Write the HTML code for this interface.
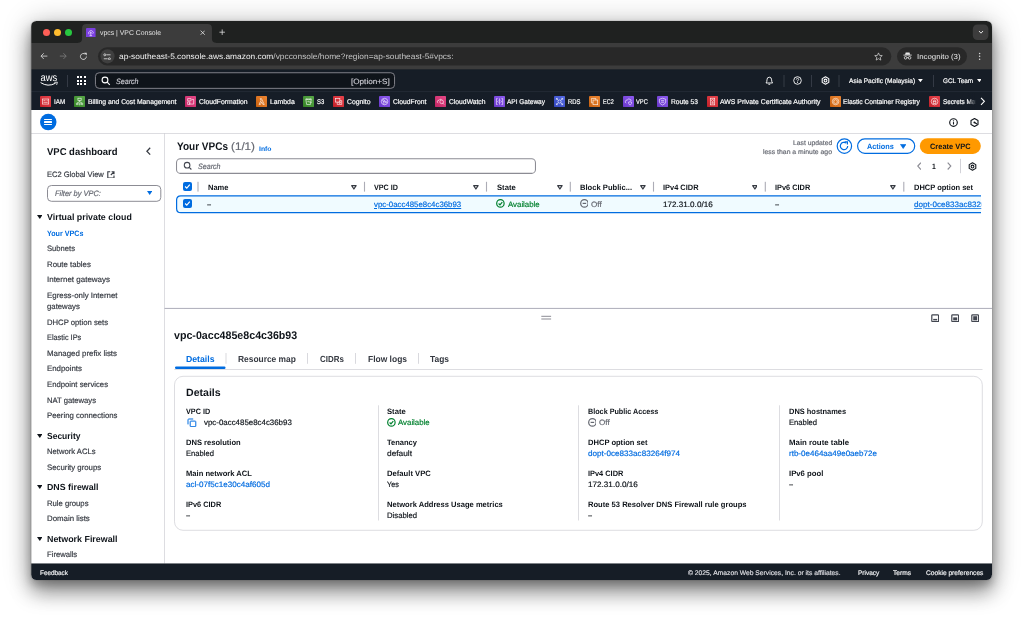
<!DOCTYPE html>
<html lang="en"><head><meta charset="utf-8"><title>vpcs | VPC Console</title>
<style>
html,body{margin:0;padding:0;background:#fff;}
body{width:1023px;height:621px;position:relative;overflow:hidden;font-family:"Liberation Sans",sans-serif;text-rendering:geometricPrecision;}
#shadow{position:absolute;left:31px;top:21px;width:961px;height:558.5px;border-radius:5.5px;
 box-shadow:0 0 1px rgba(0,0,0,.6),0 13px 20px rgba(0,0,0,.36),0 5px 8px rgba(0,0,0,.2),0 2px 28px rgba(0,0,0,.27);background:#fff;}
#win{position:absolute;left:31px;top:21px;width:961px;height:558.5px;border-radius:5.5px;overflow:hidden;background:#fff;}
#in{position:absolute;left:-31px;top:-21px;width:1023px;height:621px;will-change:transform;}
.a{position:absolute;display:block;}
.m{display:inline-block;width:0;height:0;}
.t{position:absolute;white-space:nowrap;transform-origin:0 50%;display:block;-webkit-text-stroke:0.18px currentColor;text-decoration-thickness:0.6px;text-underline-offset:1px;}
</style></head><body>
<div id="shadow"></div>
<div id="win"><div id="in">
<div class="a" style="left:31px;top:21px;width:961px;height:22.3px;background:#1f2120;"></div>
<div class="a" style="left:31px;top:43px;width:961px;height:27px;background:#3c3c3c;"></div>
<div class="a" style="left:31px;top:70px;width:961px;height:22.6px;background:#161d26;"></div>
<svg class="a" style="left:31px;top:69px" width="961" height="2"><rect x="0.00" y="0.30" width="961" height="0.8" rx="0" fill="#161d26"/></svg>
<div class="a" style="left:31px;top:92.5px;width:961px;height:17.6px;background:#161d27;"></div>
<svg class="a" style="left:31px;top:91px" width="961" height="2"><rect x="0.00" y="0.20" width="961" height="0.9" rx="0" fill="#252c37"/></svg>
<svg class="a" style="left:31px;top:109px" width="961" height="2"><rect x="0.00" y="0.90" width="961" height="0.5" rx="0" fill="#161d27"/></svg>
<div class="a" style="left:31px;top:110px;width:961px;height:24px;background:#fff;"></div>
<svg class="a" style="left:31px;top:133px" width="961" height="1"><rect x="0.00" y="0.00" width="961" height="0.6" rx="0" fill="#c6c6cd"/></svg>
<div class="a" style="left:31px;top:134px;width:134px;height:430px;background:#fff;"></div>
<svg class="a" style="left:164px;top:133px" width="1" height="431"><rect x="0.20" y="0.30" width="0.6" height="430.2" rx="0" fill="#c6c6cd"/></svg>
<div class="a" style="left:31px;top:564px;width:961px;height:17px;background:#161d26;"></div>
<svg class="a" style="left:31px;top:563px" width="961" height="2"><rect x="0.00" y="0.45" width="961" height="0.7" rx="0" fill="#161d26"/></svg>
<div class="a" style="left:42.6px;top:29.0px;width:7px;height:7px;background:#fe5f57;border-radius:50%;"></div>
<div class="a" style="left:53.8px;top:29.0px;width:7px;height:7px;background:#febc2e;border-radius:50%;"></div>
<div class="a" style="left:64.9px;top:29.0px;width:7px;height:7px;background:#28c840;border-radius:50%;"></div>
<svg class="a" style="left:78px;top:24.3px;" width="138" height="19.7" viewBox="0 0 138 19.7"><path d="M0 18.8 Q4 18.8 4 14.8 V4.5 Q4 0 8.5 0 H129.5 Q134 0 134 4.5 V14.8 Q134 18.8 138 18.8 V19.7 H0 Z" fill="#3c3c3c"/></svg>
<svg class="a" style="left:86.2px;top:27.6px;" width="9.6" height="9.6" viewBox="0 0 10 10"><rect width="10" height="10" rx="1" fill="#7a3fe0"/><path d="M3 6.5 Q2 4 4 3.2 Q5.5 1.8 7 3.6 Q8.4 4.4 7 6 M4 5 L6 5 M5 4 L5 8 M3.6 8 H6.4" stroke="#e9dcff" stroke-width=".8" fill="none"/></svg>
<svg class="a" style="left:199.5px;top:29.8px;" width="5.4" height="5.4" viewBox="0 0 6 6"><path d="M.7 .7 L5.3 5.3 M5.3 .7 L.7 5.3" stroke="#e3e3e3" stroke-width=".9" fill="none"/></svg>
<svg class="a" style="left:219px;top:29.3px;" width="6.4" height="6.4" viewBox="0 0 7 7"><path d="M3.5 .5 V6.5 M.5 3.5 H6.5" stroke="#e3e3e3" stroke-width=".85" fill="none"/></svg>
<svg class="a" style="left:971px;top:23px" width="19" height="18"><rect x="1.80" y="1.50" width="15.60" height="15.50" rx="4.60" fill="#3c3c3c"/></svg>
<svg class="a" style="left:977.6px;top:30.4px;" width="6" height="4.4" viewBox="0 0 6 4.4"><path d="M1 1 L3 3.2 L5 1" stroke="#e3e3e3" stroke-width="1" fill="none"/></svg>
<svg class="a" style="left:39.5px;top:52.2px;" width="8.2" height="8.2" viewBox="0 0 10 10"><path d="M9 5 H1.3 M4.6 1.5 L1.2 5 L4.6 8.5" stroke="#dadada" stroke-width="1" fill="none"/></svg>
<svg class="a" style="left:59.4px;top:52.2px;" width="8.2" height="8.2" viewBox="0 0 10 10"><path d="M1 5 H8.7 M5.4 1.5 L8.8 5 L5.4 8.5" stroke="#7d7d7d" stroke-width="1" fill="none"/></svg>
<svg class="a" style="left:78.8px;top:51.8px;" width="9" height="9" viewBox="0 0 10 10"><path d="M8.2 5 A3.3 3.3 0 1 1 6.9 2.35" stroke="#dadada" stroke-width="1" fill="none"/><path d="M5.6 .8 H8.6 V3.8 Z" fill="#dadada"/></svg>
<svg class="a" style="left:97px;top:46px" width="796" height="21"><rect x="1.00" y="1.20" width="793.30" height="18.30" rx="9.15" fill="#282828"/></svg>
<svg class="a" style="left:99px;top:48px" width="17" height="17"><rect x="1.50" y="1.30" width="14.10" height="14.10" rx="7.05" fill="#3f3f3f"/></svg>
<svg class="a" style="left:103.4px;top:52.6px;" width="8.4" height="7.6" viewBox="0 0 8.4 7.6"><path d="M3.4 1.8 H7.6 M.8 5.8 H4.6" stroke="#e3e3e3" stroke-width=".8"/><circle cx="1.8" cy="1.8" r="1" fill="none" stroke="#e3e3e3" stroke-width=".8"/><circle cx="6.4" cy="5.8" r="1" fill="none" stroke="#e3e3e3" stroke-width=".8"/></svg>
<svg class="a" style="left:873.8px;top:51.8px;" width="9" height="9" viewBox="0 0 10 10"><path d="M5 1 L6.2 3.8 L9.2 4 L6.9 6 L7.6 9 L5 7.4 L2.4 9 L3.1 6 L.8 4 L3.8 3.8 Z" stroke="#dadada" stroke-width=".8" fill="none" stroke-linejoin="round"/></svg>
<svg class="a" style="left:896px;top:46px" width="72" height="21"><rect x="1.00" y="1.20" width="70.00" height="18.30" rx="9.15" fill="#282828"/></svg>
<svg class="a" style="left:903px;top:52.3px;" width="9.2" height="8" viewBox="0 0 9.2 8"><path d="M.4 3.1 H8.8" stroke="#e8e8e8" stroke-width=".8"/><path d="M2 2.8 L2.7 .5 H6.5 L7.2 2.8 Z" fill="#e8e8e8"/><circle cx="2.6" cy="5.8" r="1.3" fill="none" stroke="#e8e8e8" stroke-width=".8"/><circle cx="6.6" cy="5.8" r="1.3" fill="none" stroke="#e8e8e8" stroke-width=".8"/><path d="M3.9 5.6 H5.3" stroke="#e8e8e8" stroke-width=".7"/></svg>
<svg class="a" style="left:977px;top:51px" width="5" height="5"><rect x="1.85" y="1.70" width="1.50" height="1.50" rx="0.75" fill="#dadada"/></svg>
<svg class="a" style="left:977px;top:54px" width="5" height="5"><rect x="1.85" y="1.60" width="1.50" height="1.50" rx="0.75" fill="#dadada"/></svg>
<svg class="a" style="left:977px;top:57px" width="5" height="4"><rect x="1.85" y="1.50" width="1.50" height="1.50" rx="0.75" fill="#dadada"/></svg>
<svg class="a" style="left:40.3px;top:73.6px;" width="18.6" height="13" viewBox="0 0 18.6 13"><text x="0.4" y="7.2" font-family="Liberation Sans, sans-serif" font-size="10.6" font-weight="400" fill="#fff" textLength="16.8" lengthAdjust="spacingAndGlyphs">aws</text><path d="M.6 8.6 Q8 13.4 15.6 9.2" stroke="#fff" stroke-width="1" fill="none"/><path d="M14.2 8.3 L17.4 8.2 L16.6 10.9" stroke="#fff" stroke-width=".8" fill="none"/></svg>
<svg class="a" style="left:67px;top:75px" width="1" height="12"><rect x="0.20" y="0.00" width="0.6" height="12" rx="0" fill="#4a4f5a"/></svg>
<div class="a" style="left:76.6px;top:76.1px;width:2.4px;height:2.3px;background:#fff;"></div>
<div class="a" style="left:76.6px;top:79.5px;width:2.4px;height:2.3px;background:#fff;"></div>
<div class="a" style="left:76.6px;top:82.89999999999999px;width:2.4px;height:2.3px;background:#fff;"></div>
<div class="a" style="left:80.1px;top:76.1px;width:2.4px;height:2.3px;background:#fff;"></div>
<div class="a" style="left:80.1px;top:79.5px;width:2.4px;height:2.3px;background:#fff;"></div>
<div class="a" style="left:80.1px;top:82.89999999999999px;width:2.4px;height:2.3px;background:#fff;"></div>
<div class="a" style="left:83.6px;top:76.1px;width:2.4px;height:2.3px;background:#fff;"></div>
<div class="a" style="left:83.6px;top:79.5px;width:2.4px;height:2.3px;background:#fff;"></div>
<div class="a" style="left:83.6px;top:82.89999999999999px;width:2.4px;height:2.3px;background:#fff;"></div>
<svg class="a" style="left:94px;top:71px" width="302" height="19"><rect x="1.45" y="1.75" width="299.10" height="15.60" rx="3.75" fill="#0f141a" stroke="#8c8c94" stroke-width="0.9"/></svg>
<svg class="a" style="left:101.4px;top:76.4px;" width="9.4" height="9.4" viewBox="0 0 9.4 9.4"><circle cx="4" cy="4" r="2.9" fill="none" stroke="#fff" stroke-width="1.1"/><path d="M6.2 6.2 L8.8 8.8" stroke="#fff" stroke-width="1.1"/></svg>
<svg class="a" style="left:765.3px;top:76px;" width="8.6" height="9.4" viewBox="0 0 8.6 9.4"><path d="M1 7 Q2 6 2 3.8 Q2 1.2 4.3 1.2 Q6.6 1.2 6.6 3.8 Q6.6 6 7.6 7 Z" fill="none" stroke="#fff" stroke-width=".9" stroke-linejoin="round"/><path d="M3.4 8.3 H5.2" stroke="#fff" stroke-width=".9"/></svg>
<svg class="a" style="left:783px;top:75px" width="2" height="12"><rect x="0.70" y="0.00" width="0.6" height="12" rx="0" fill="#4a4f5a"/></svg>
<svg class="a" style="left:793px;top:76.2px;" width="9" height="9" viewBox="0 0 9 9"><circle cx="4.5" cy="4.5" r="3.8" fill="none" stroke="#fff" stroke-width=".9"/><path d="M3.3 3.6 Q3.3 2.4 4.5 2.4 Q5.7 2.4 5.7 3.5 Q5.7 4.3 4.5 4.8 V5.4" fill="none" stroke="#fff" stroke-width=".8"/><circle cx="4.5" cy="6.6" r=".5" fill="#fff"/></svg>
<svg class="a" style="left:811px;top:75px" width="1" height="12"><rect x="0.20" y="0.00" width="0.6" height="12" rx="0" fill="#4a4f5a"/></svg>
<svg class="a" style="left:820.8px;top:76.1px;" width="9" height="9" viewBox="0 0 9 9"><path d="M4.5 .7 L7.8 2.6 V6.4 L4.5 8.3 L1.2 6.4 V2.6 Z" fill="none" stroke="#fff" stroke-width="1.05" stroke-linejoin="round"/><circle cx="4.5" cy="4.5" r="1.4" fill="none" stroke="#fff" stroke-width="1.05"/></svg>
<svg class="a" style="left:838px;top:75px" width="2" height="12"><rect x="0.70" y="0.00" width="0.6" height="12" rx="0" fill="#4a4f5a"/></svg>
<svg class="a" style="left:918.2px;top:79.2px;" width="4.8" height="3.2" viewBox="0 0 4.8 3.2"><path d="M0 0 H4.8 L2.4 3.2 Z" fill="#fff"/></svg>
<svg class="a" style="left:933px;top:75px" width="1" height="12"><rect x="0.00" y="0.00" width="0.6" height="12" rx="0" fill="#4a4f5a"/></svg>
<svg class="a" style="left:976.6px;top:79.2px;" width="4.8" height="3.2" viewBox="0 0 4.8 3.2"><path d="M0 0 H4.8 L2.4 3.2 Z" fill="#fff"/></svg>
<svg class="a" style="left:0;top:0" width="0" height="0"><defs><linearGradient id="ig" x1="0" y1="1" x2="1" y2="0"><stop offset="0" stop-color="#000" stop-opacity=".16"/><stop offset="1" stop-color="#fff" stop-opacity=".14"/></linearGradient></defs></svg>
<svg class="a" style="left:40.0px;top:95.7px;" width="11.1" height="11.1" viewBox="0 0 11 11"><rect width="11" height="11" rx="1.1" fill="#e5252f"/><rect width="11" height="11" rx="1.1" fill="url(#ig)"/><g fill="none" stroke="#fff" stroke-opacity=".85" stroke-width=".7"><rect x="2.4" y="3" width="6.2" height="5"/><path d="M3.4 4.6h2 M3.4 6.3h4.2 M6.6 4.6h1"/></g></svg>
<svg class="a" style="left:74.1px;top:95.7px;" width="11.1" height="11.1" viewBox="0 0 11 11"><rect width="11" height="11" rx="1.1" fill="#3d9a2a"/><rect width="11" height="11" rx="1.1" fill="url(#ig)"/><g fill="none" stroke="#fff" stroke-opacity=".85" stroke-width=".7"><rect x="3.9" y="2.2" width="3.2" height="2.2"/><path d="M5.5 4.4V5.6 M3 7 L5.5 5.6 L8 7"/><circle cx="3" cy="7.9" r=".8"/><circle cx="5.5" cy="7.9" r=".8"/><circle cx="8" cy="7.9" r=".8"/></g></svg>
<svg class="a" style="left:184.9px;top:95.7px;" width="11.1" height="11.1" viewBox="0 0 11 11"><rect width="11" height="11" rx="1.1" fill="#e42a74"/><rect width="11" height="11" rx="1.1" fill="url(#ig)"/><g fill="none" stroke="#fff" stroke-opacity=".85" stroke-width=".7"><path d="M2.6 2.6h3.4v2.2h-3.4z M6.8 3.4h1.8v4.6h-4v-1.4 M2.6 5.8h2.2v2.6h-2.2z"/></g></svg>
<svg class="a" style="left:255.9px;top:95.7px;" width="11.1" height="11.1" viewBox="0 0 11 11"><rect width="11" height="11" rx="1.1" fill="#ec7211"/><rect width="11" height="11" rx="1.1" fill="url(#ig)"/><g fill="none" stroke="#fff" stroke-opacity=".85" stroke-width=".7"><path d="M3 8.4 L5 4.4 L4.2 2.6 H5.4 L8.2 8.4 H6.8 L5.6 5.8 L4.4 8.4 Z"/></g></svg>
<svg class="a" style="left:302.9px;top:95.7px;" width="11.1" height="11.1" viewBox="0 0 11 11"><rect width="11" height="11" rx="1.1" fill="#3d9a2a"/><rect width="11" height="11" rx="1.1" fill="url(#ig)"/><g fill="none" stroke="#fff" stroke-opacity=".85" stroke-width=".7"><path d="M2.8 3 H8.2 L7.4 8.4 H3.6 Z M2.8 3 Q5.5 4.4 8.2 3 M4.4 5.4 L8.6 6.4"/></g></svg>
<svg class="a" style="left:332.9px;top:95.7px;" width="11.1" height="11.1" viewBox="0 0 11 11"><rect width="11" height="11" rx="1.1" fill="#e5252f"/><rect width="11" height="11" rx="1.1" fill="url(#ig)"/><g fill="none" stroke="#fff" stroke-opacity=".85" stroke-width=".7"><rect x="2.4" y="2.6" width="4.4" height="3.4"/><path d="M4.2 6V8.4H8.6V4.6H6.8"/><circle cx="6.6" cy="6.6" r=".8"/></g></svg>
<svg class="a" style="left:378.9px;top:95.7px;" width="11.1" height="11.1" viewBox="0 0 11 11"><rect width="11" height="11" rx="1.1" fill="#7b40ee"/><rect width="11" height="11" rx="1.1" fill="url(#ig)"/><g fill="none" stroke="#fff" stroke-opacity=".85" stroke-width=".7"><circle cx="5.5" cy="5.5" r="3.2"/><circle cx="4.6" cy="4.6" r=".9"/><circle cx="6.8" cy="6" r=".7"/><path d="M5.3 5.1 L6.2 5.7 M4.6 5.5 L5 8.4"/></g></svg>
<svg class="a" style="left:434.9px;top:95.7px;" width="11.1" height="11.1" viewBox="0 0 11 11"><rect width="11" height="11" rx="1.1" fill="#e42a74"/><rect width="11" height="11" rx="1.1" fill="url(#ig)"/><g fill="none" stroke="#fff" stroke-opacity=".85" stroke-width=".7"><path d="M3.2 6.8 Q1.8 6.4 2.4 5.2 Q2.6 4 4 4.2 Q4.8 2.6 6.4 3.4"/><circle cx="6.6" cy="5.8" r="1.8"/><path d="M7.9 7.1 L9 8.4"/></g></svg>
<svg class="a" style="left:493.7px;top:95.7px;" width="11.1" height="11.1" viewBox="0 0 11 11"><rect width="11" height="11" rx="1.1" fill="#7b40ee"/><rect width="11" height="11" rx="1.1" fill="url(#ig)"/><g fill="none" stroke="#fff" stroke-opacity=".85" stroke-width=".7"><path d="M3.6 2.6H2.4V8.4H3.6 M7.4 2.6H8.6V8.4H7.4 M5.5 2.4V8.6 M4.4 4.6L3.6 5.5L4.4 6.4 M6.6 4.6L7.4 5.5L6.6 6.4"/></g></svg>
<svg class="a" style="left:554.1px;top:95.7px;" width="11.1" height="11.1" viewBox="0 0 11 11"><rect width="11" height="11" rx="1.1" fill="#3b52e0"/><rect width="11" height="11" rx="1.1" fill="url(#ig)"/><g fill="none" stroke="#fff" stroke-opacity=".85" stroke-width=".7"><circle cx="5.5" cy="5.5" r="1.6"/><path d="M2.4 2.4L4.3 4.3 M8.6 2.4L6.7 4.3 M2.4 8.6L4.3 6.7 M8.6 8.6L6.7 6.7 M2.4 3.8V2.4H3.8 M7.2 2.4H8.6V3.8 M2.4 7.2V8.6H3.8 M8.6 7.2V8.6H7.2"/></g></svg>
<svg class="a" style="left:588.7px;top:95.7px;" width="11.1" height="11.1" viewBox="0 0 11 11"><rect width="11" height="11" rx="1.1" fill="#ec7211"/><rect width="11" height="11" rx="1.1" fill="url(#ig)"/><g fill="none" stroke="#fff" stroke-opacity=".85" stroke-width=".7"><rect x="4" y="4" width="4.6" height="4.6"/><path d="M6.8 4V2.4H2.4V6.8H4"/></g></svg>
<svg class="a" style="left:622.7px;top:95.7px;" width="11.1" height="11.1" viewBox="0 0 11 11"><rect width="11" height="11" rx="1.1" fill="#7b40ee"/><rect width="11" height="11" rx="1.1" fill="url(#ig)"/><g fill="none" stroke="#fff" stroke-opacity=".85" stroke-width=".7"><path d="M3.2 7 Q1.8 6.6 2.4 5.2 Q2.6 3.8 4.2 4 Q5 2.4 6.8 3.2 Q8.2 3.6 8 5"/><path d="M5.6 7.4V6 Q7 5.4 8.4 6 V7.4 Q8 8.6 7 8.9 Q6 8.6 5.6 7.4"/></g></svg>
<svg class="a" style="left:656.9px;top:95.7px;" width="11.1" height="11.1" viewBox="0 0 11 11"><rect width="11" height="11" rx="1.1" fill="#7b40ee"/><rect width="11" height="11" rx="1.1" fill="url(#ig)"/><g fill="none" stroke="#fff" stroke-opacity=".85" stroke-width=".7"><path d="M5.5 2.2 L8.6 3.2 V6 Q8.2 8 5.5 9 Q2.8 8 2.4 6 V3.2 Z M4 4.6H7 M4 6.2H7"/></g></svg>
<svg class="a" style="left:706.7px;top:95.7px;" width="11.1" height="11.1" viewBox="0 0 11 11"><rect width="11" height="11" rx="1.1" fill="#e5252f"/><rect width="11" height="11" rx="1.1" fill="url(#ig)"/><g fill="none" stroke="#fff" stroke-opacity=".85" stroke-width=".7"><rect x="3.4" y="2.2" width="4.2" height="6.6"/><circle cx="5.5" cy="4.4" r="1"/><path d="M4.4 6.4H6.6 M4.4 7.6H6.6"/></g></svg>
<svg class="a" style="left:829.5px;top:95.7px;" width="11.1" height="11.1" viewBox="0 0 11 11"><rect width="11" height="11" rx="1.1" fill="#ec7211"/><rect width="11" height="11" rx="1.1" fill="url(#ig)"/><g fill="none" stroke="#fff" stroke-opacity=".85" stroke-width=".7"><circle cx="5.5" cy="5.5" r="3.2"/><path d="M5.5 3.6 L7.2 4.6 V6.6 L5.5 7.6 L3.8 6.6 V4.6 Z"/></g></svg>
<svg class="a" style="left:928.9px;top:95.7px;" width="11.1" height="11.1" viewBox="0 0 11 11"><rect width="11" height="11" rx="1.1" fill="#e5252f"/><rect width="11" height="11" rx="1.1" fill="url(#ig)"/><g fill="none" stroke="#fff" stroke-opacity=".85" stroke-width=".7"><circle cx="5.5" cy="5.5" r="3.3"/><rect x="4.2" y="5.2" width="2.6" height="2.2"/><path d="M4.7 5.2V4.4 Q5.5 3.4 6.3 4.4 V5.2"/></g></svg>
<svg class="a" style="left:39px;top:112px" width="19" height="20"><rect x="1.00" y="1.80" width="16.50" height="16.50" rx="8.25" fill="#006ce0"/></svg>
<div class="a" style="left:44.3px;top:119.0px;width:8px;height:1.2px;background:#fff;border-radius:.6px;"></div>
<div class="a" style="left:44.3px;top:121.4px;width:8px;height:1.2px;background:#fff;border-radius:.6px;"></div>
<div class="a" style="left:44.3px;top:123.80000000000001px;width:8px;height:1.2px;background:#fff;border-radius:.6px;"></div>
<svg class="a" style="left:948.9px;top:117.5px;" width="9" height="9" viewBox="0 0 9 9"><circle cx="4.5" cy="4.5" r="3.8" fill="none" stroke="#0f141a" stroke-width="1.15"/><path d="M4.5 4.1 V6.5" stroke="#0f141a" stroke-width="1.1"/><circle cx="4.5" cy="2.8" r=".65" fill="#0f141a"/></svg>
<svg class="a" style="left:970.1px;top:117.5px;" width="9" height="9" viewBox="0 0 9 9"><path d="M4.5 .6 L8 2.6 V6.4 L4.5 8.4 L1 6.4 V2.6 Z" fill="none" stroke="#0f141a" stroke-width="1.1" stroke-linejoin="round"/><path d="M4.5 4.5 L7 6" fill="none" stroke="#0f141a" stroke-width="1.1"/><circle cx="4.4" cy="4.4" r=".95" fill="#0f141a"/></svg>
<svg class="a" style="left:145.6px;top:146.6px;" width="5" height="8.4" viewBox="0 0 5 8.4"><path d="M4.2 .8 L.9 4.2 L4.2 7.6" stroke="#353941" stroke-width="1.25" fill="none"/></svg>
<svg class="a" style="left:107.3px;top:170.6px;" width="7.8" height="7.8" viewBox="0 0 7.8 7.8"><path d="M3.2 .8 H.8 V7 H7 V4.6 M4.6 .8 H7 V3.2 M7 .8 L3.8 4" fill="none" stroke="#353941" stroke-width="1.1"/></svg>
<svg class="a" style="left:46px;top:184px" width="117" height="19"><rect x="1.50" y="1.50" width="113.30" height="15.80" rx="3.90" fill="#fff" stroke="#8c8c94" stroke-width="1.0"/></svg>
<svg class="a" style="left:146.8px;top:191.2px;" width="5.4" height="4" viewBox="0 0 5.4 4"><path d="M0 0 H5.4 L2.7 4 Z" fill="#006ce0"/></svg>
<svg class="a" style="left:36.8px;top:214.6px;" width="5.6" height="4" viewBox="0 0 5.6 4"><path d="M0 0 H5.6 L2.8 4 Z" fill="#0f141a"/></svg>
<svg class="a" style="left:36.8px;top:433.70000000000005px;" width="5.6" height="4" viewBox="0 0 5.6 4"><path d="M0 0 H5.6 L2.8 4 Z" fill="#0f141a"/></svg>
<svg class="a" style="left:36.8px;top:485.1px;" width="5.6" height="4" viewBox="0 0 5.6 4"><path d="M0 0 H5.6 L2.8 4 Z" fill="#0f141a"/></svg>
<svg class="a" style="left:36.8px;top:536.9px;" width="5.6" height="4" viewBox="0 0 5.6 4"><path d="M0 0 H5.6 L2.8 4 Z" fill="#0f141a"/></svg>
<svg class="a" style="left:835px;top:137px" width="19" height="18"><rect x="2.20" y="1.90" width="14.40" height="14.40" rx="7.20" fill="#fff" stroke="#006ce0" stroke-width="1.2"/></svg>
<svg class="a" style="left:839.3px;top:141.3px;" width="10" height="10" viewBox="0 0 10 10"><path d="M8.7 5 A3.7 3.7 0 1 1 7.3 2.1" stroke="#006ce0" stroke-width="1.2" fill="none"/><path d="M5.6 .8 H8.4 V3.6" fill="none" stroke="#006ce0" stroke-width="1.2"/></svg>
<svg class="a" style="left:856px;top:137px" width="61" height="18"><rect x="1.60" y="1.90" width="57.10" height="14.40" rx="7.20" fill="#fff" stroke="#006ce0" stroke-width="1.2"/></svg>
<svg class="a" style="left:900px;top:144.2px;" width="6.4" height="4.9" viewBox="0 0 6.4 4.9"><path d="M.5 .4 H5.9 L3.2 4.5 Z" fill="#006ce0" stroke="#006ce0" stroke-width=".7" stroke-linejoin="round"/></svg>
<svg class="a" style="left:918px;top:137px" width="64" height="18"><rect x="1.80" y="1.30" width="61.00" height="15.60" rx="7.80" fill="#ff9900"/></svg>
<svg class="a" style="left:175px;top:157px" width="362" height="18"><rect x="1.52" y="1.83" width="358.95" height="14.55" rx="3.88" fill="#fff" stroke="#8c8c94" stroke-width="1.05"/></svg>
<svg class="a" style="left:182.7px;top:161.4px;" width="9.2" height="9.2" viewBox="0 0 9.2 9.2"><circle cx="4.1" cy="4.2" r="2.8" fill="none" stroke="#424650" stroke-width="1.1"/><path d="M6.2 6.3 L8.4 8.5" stroke="#424650" stroke-width="1.1"/></svg>
<svg class="a" style="left:916.8px;top:162.2px;" width="4.6" height="8.2" viewBox="0 0 4.6 8.2"><path d="M3.9 .7 L.8 4.1 L3.9 7.5" stroke="#8c8c94" stroke-width="1.15" fill="none"/></svg>
<svg class="a" style="left:947.4px;top:162.2px;" width="4.6" height="8.2" viewBox="0 0 4.6 8.2"><path d="M.7 .7 L3.8 4.1 L.7 7.5" stroke="#8c8c94" stroke-width="1.15" fill="none"/></svg>
<svg class="a" style="left:960px;top:158px" width="1" height="16"><rect x="0.00" y="0.80" width="0.6" height="14.4" rx="0" fill="#b4b4bf"/></svg>
<svg class="a" style="left:968.3px;top:161.8px;" width="9" height="9" viewBox="0 0 9 9"><path d="M4.5 .7 L7.8 2.6 V6.4 L4.5 8.3 L1.2 6.4 V2.6 Z" fill="none" stroke="#0f141a" stroke-width="1.05" stroke-linejoin="round"/><circle cx="4.5" cy="4.5" r="1.4" fill="none" stroke="#0f141a" stroke-width="1.05"/></svg>
<div class="a" style="left:183px;top:182px;width:8.8px;height:8.8px;background:#006ce0;border-radius:2px;"></div>
<svg class="a" style="left:183px;top:182px;" width="8.8" height="8.8" viewBox="0 0 8.8 8.8"><path d="M2.1 4.5 L3.8 6.2 L6.8 2.7" stroke="#fff" stroke-width="1.15" fill="none"/></svg>
<svg class="a" style="left:197px;top:181px" width="2" height="11"><rect x="0.45" y="0.80" width="1.1" height="9.8" rx="0" fill="#acacb6"/></svg>
<svg class="a" style="left:351.1px;top:184.9px;" width="5.8" height="4.8" viewBox="0 0 5.8 4.8"><path d="M.7 .7 H5.1 L2.9 4 Z" fill="none" stroke="#353941" stroke-width="1.25" stroke-linejoin="round"/></svg>
<svg class="a" style="left:363px;top:181px" width="3" height="11"><rect x="0.95" y="0.80" width="1.1" height="9.8" rx="0" fill="#acacb6"/></svg>
<svg class="a" style="left:473.1px;top:184.9px;" width="5.8" height="4.8" viewBox="0 0 5.8 4.8"><path d="M.7 .7 H5.1 L2.9 4 Z" fill="none" stroke="#353941" stroke-width="1.25" stroke-linejoin="round"/></svg>
<svg class="a" style="left:485px;top:181px" width="3" height="11"><rect x="0.95" y="0.80" width="1.1" height="9.8" rx="0" fill="#acacb6"/></svg>
<svg class="a" style="left:556.9px;top:184.9px;" width="5.8" height="4.8" viewBox="0 0 5.8 4.8"><path d="M.7 .7 H5.1 L2.9 4 Z" fill="none" stroke="#353941" stroke-width="1.25" stroke-linejoin="round"/></svg>
<svg class="a" style="left:569px;top:181px" width="2" height="11"><rect x="0.75" y="0.80" width="1.1" height="9.8" rx="0" fill="#acacb6"/></svg>
<svg class="a" style="left:640.1px;top:184.9px;" width="5.8" height="4.8" viewBox="0 0 5.8 4.8"><path d="M.7 .7 H5.1 L2.9 4 Z" fill="none" stroke="#353941" stroke-width="1.25" stroke-linejoin="round"/></svg>
<svg class="a" style="left:652px;top:181px" width="3" height="11"><rect x="0.95" y="0.80" width="1.1" height="9.8" rx="0" fill="#acacb6"/></svg>
<svg class="a" style="left:751.6px;top:184.9px;" width="5.8" height="4.8" viewBox="0 0 5.8 4.8"><path d="M.7 .7 H5.1 L2.9 4 Z" fill="none" stroke="#353941" stroke-width="1.25" stroke-linejoin="round"/></svg>
<svg class="a" style="left:764px;top:181px" width="2" height="11"><rect x="0.75" y="0.80" width="1.1" height="9.8" rx="0" fill="#acacb6"/></svg>
<svg class="a" style="left:890.1px;top:184.9px;" width="5.8" height="4.8" viewBox="0 0 5.8 4.8"><path d="M.7 .7 H5.1 L2.9 4 Z" fill="none" stroke="#353941" stroke-width="1.25" stroke-linejoin="round"/></svg>
<svg class="a" style="left:903px;top:181px" width="2" height="11"><rect x="0.25" y="0.80" width="1.1" height="9.8" rx="0" fill="#acacb6"/></svg>
<svg class="a" style="left:175px;top:194px" width="805.9" height="21"><path d="M806.5 1.8 H5.9 Q1.6 1.8 1.6 6.1 V14.4 Q1.6 18.7 5.9 18.7 H806.5" fill="#f0fbff" stroke="#006ce0" stroke-width="1.2"/></svg>
<div class="a" style="left:183px;top:199.4px;width:8.8px;height:8.8px;background:#006ce0;border-radius:2px;"></div>
<svg class="a" style="left:183px;top:199.4px;" width="8.8" height="8.8" viewBox="0 0 8.8 8.8"><path d="M2.1 4.5 L3.8 6.2 L6.8 2.7" stroke="#fff" stroke-width="1.15" fill="none"/></svg>
<svg class="a" style="left:496.2px;top:199.4px;" width="8.8" height="8.8" viewBox="0 0 8.4 8.4"><circle cx="4.2" cy="4.2" r="3.55" fill="none" stroke="#00802f" stroke-width="1.15"/><path d="M2.5 4.3 L3.8 5.6 L6 3" fill="none" stroke="#00802f" stroke-width="1.15"/></svg>
<svg class="a" style="left:579.6px;top:199.4px;" width="8.8" height="8.8" viewBox="0 0 8.4 8.4"><circle cx="4.2" cy="4.2" r="3.55" fill="none" stroke="#656871" stroke-width="1.15"/><path d="M2.5 4.2 H5.9" stroke="#656871" stroke-width="1.15"/></svg>
<svg class="a" style="left:164px;top:307px" width="828" height="2"><rect x="0.50" y="0.90" width="827.5" height="1.1" rx="0" fill="#b4b4bf"/></svg>
<svg class="a" style="left:541px;top:315px" width="11" height="2"><rect x="0.30" y="0.80" width="9.8" height="1.0" rx="0" fill="#8c8c94"/></svg>
<svg class="a" style="left:541px;top:318px" width="11" height="2"><rect x="0.30" y="0.50" width="9.8" height="1.0" rx="0" fill="#8c8c94"/></svg>
<svg class="a" style="left:930.5999999999999px;top:313.90000000000003px;" width="8.4" height="8.4" viewBox="0 0 8.4 8.4"><rect x=".8" y=".8" width="6.8" height="6.8" rx=".7" fill="none" stroke="#424650" stroke-width="1.2"/><rect x="2.2" y="4.9" width="4" height="1.5" fill="#424650"/></svg>
<svg class="a" style="left:950.5999999999999px;top:313.90000000000003px;" width="8.4" height="8.4" viewBox="0 0 8.4 8.4"><rect x=".8" y=".8" width="6.8" height="6.8" rx=".7" fill="none" stroke="#424650" stroke-width="1.2"/><rect x="2.2" y="3.4" width="4" height="3" fill="#424650"/></svg>
<svg class="a" style="left:970.5999999999999px;top:313.90000000000003px;" width="8.4" height="8.4" viewBox="0 0 8.4 8.4"><rect x=".8" y=".8" width="6.8" height="6.8" rx=".7" fill="none" stroke="#424650" stroke-width="1.2"/><rect x="2.2" y="2.2" width="4" height="4.2" fill="#424650"/></svg>
<svg class="a" style="left:175px;top:366px" width="51" height="3"><rect x="0.00" y="0.40" width="50.5" height="2.5" rx="1.2" fill="#006ce0"/></svg>
<svg class="a" style="left:225px;top:353px" width="2" height="11"><rect x="0.70" y="0.00" width="0.6" height="10.8" rx="0" fill="#c0c0c8"/></svg>
<svg class="a" style="left:307px;top:353px" width="1" height="11"><rect x="0.20" y="0.00" width="0.6" height="10.8" rx="0" fill="#c0c0c8"/></svg>
<svg class="a" style="left:355px;top:353px" width="1" height="11"><rect x="0.20" y="0.00" width="0.6" height="10.8" rx="0" fill="#c0c0c8"/></svg>
<svg class="a" style="left:418px;top:353px" width="1" height="11"><rect x="0.20" y="0.00" width="0.6" height="10.8" rx="0" fill="#c0c0c8"/></svg>
<svg class="a" style="left:174px;top:369px" width="809" height="1"><rect x="0.30" y="0.20" width="808.2" height="0.6" rx="0" fill="#c6c6cd"/></svg>
<svg class="a" style="left:173px;top:375px" width="811" height="157"><rect x="1.50" y="1.30" width="807.80" height="154.00" rx="8.50" fill="#fff" stroke="#c6c6cd" stroke-width="0.6"/></svg>
<svg class="a" style="left:378px;top:405px" width="1" height="116"><rect x="0.00" y="0.30" width="0.6" height="115.2" rx="0" fill="#c6c6cd"/></svg>
<svg class="a" style="left:578px;top:405px" width="1" height="116"><rect x="0.30" y="0.30" width="0.6" height="115.2" rx="0" fill="#c6c6cd"/></svg>
<svg class="a" style="left:779px;top:405px" width="1" height="116"><rect x="0.10" y="0.30" width="0.6" height="115.2" rx="0" fill="#c6c6cd"/></svg>
<svg class="a" style="left:187.4px;top:417.8px;" width="9.6" height="9.4" viewBox="0 0 9.6 9.4"><path d="M1 6.4 V1.8 Q1 1 1.8 1 H6.2" fill="none" stroke="#006ce0" stroke-width="1"/><rect x="3.2" y="3.1" width="5.6" height="5.6" rx=".6" fill="none" stroke="#006ce0" stroke-width="1"/></svg>
<svg class="a" style="left:386.9px;top:417.90000000000003px;" width="8.8" height="8.8" viewBox="0 0 8.4 8.4"><circle cx="4.2" cy="4.2" r="3.55" fill="none" stroke="#00802f" stroke-width="1.15"/><path d="M2.5 4.3 L3.8 5.6 L6 3" fill="none" stroke="#00802f" stroke-width="1.15"/></svg>
<svg class="a" style="left:587.6px;top:417.90000000000003px;" width="8.8" height="8.8" viewBox="0 0 8.4 8.4"><circle cx="4.2" cy="4.2" r="3.55" fill="none" stroke="#656871" stroke-width="1.15"/><path d="M2.5 4.2 H5.9" stroke="#656871" stroke-width="1.15"/></svg>
<svg class="a" style="left:31px;top:24px" width="1" height="553"><rect x="0.00" y="0.00" width="0.38" height="553" rx="0" fill="#8a8a8a"/></svg>
<span class="t" style="left:100px;top:29.87px;font-size:6.9px;line-height:7px;color:#e3e3e3;transform:scaleX(0.9974);-webkit-text-stroke-width:0;">vpcs | VPC Console</span>
<span class="t" style="left:118.5px;top:51.93px;font-size:7.9px;line-height:9px;color:#f0f0f0;transform:scaleX(1.0599);-webkit-text-stroke-width:0;">ap-southeast-5.console.aws.amazon.com<span style="color:#c2c2c2">/vpcconsole/home?region=ap-southeast-5#vpcs:</span></span>
<span class="t" style="left:916.7px;top:51.68px;font-size:7.2px;line-height:9px;color:#ececec;transform:scaleX(1.0888);-webkit-text-stroke-width:0;">Incognito (3)</span>
<span class="t" style="left:115.5px;top:76.59px;font-size:7.8px;line-height:9px;color:#c6c6cd;font-style:italic;transform:scaleX(0.9102);">Search</span>
<span class="t" style="left:350.8px;top:76.52px;font-size:7.6px;line-height:9px;color:#c6c6cd;transform:scaleX(1.0722);">[Option+S]</span>
<span class="t" style="left:848.8px;top:78.0px;font-size:6.7px;line-height:7px;color:#fff;transform:scaleX(0.9842);">Asia Pacific (Malaysia)</span>
<span class="t" style="left:942.8px;top:78.0px;font-size:6.7px;line-height:7px;color:#fff;transform:scaleX(0.9496);">GCL Team</span>
<span class="t" style="left:53.8px;top:99.02px;font-size:6.9px;line-height:7px;color:#ffffff;transform:scaleX(0.9131);">IAM</span>
<span class="t" style="left:87.5px;top:99.02px;font-size:6.9px;line-height:7px;color:#ffffff;transform:scaleX(0.9832);">Billing and Cost Management</span>
<span class="t" style="left:198.5px;top:99.02px;font-size:6.9px;line-height:7px;color:#ffffff;transform:scaleX(0.9892);">CloudFormation</span>
<span class="t" style="left:269.5px;top:99.02px;font-size:6.9px;line-height:7px;color:#ffffff;transform:scaleX(0.9917);">Lambda</span>
<span class="t" style="left:316.8px;top:99.02px;font-size:6.9px;line-height:7px;color:#ffffff;transform:scaleX(0.8533);">S3</span>
<span class="t" style="left:346.5px;top:99.02px;font-size:6.9px;line-height:7px;color:#ffffff;transform:scaleX(0.9888);">Cognito</span>
<span class="t" style="left:392.7px;top:99.02px;font-size:6.9px;line-height:7px;color:#ffffff;transform:scaleX(0.9767);">CloudFront</span>
<span class="t" style="left:448.5px;top:99.02px;font-size:6.9px;line-height:7px;color:#ffffff;transform:scaleX(0.9790);">CloudWatch</span>
<span class="t" style="left:507px;top:99.02px;font-size:6.9px;line-height:7px;color:#ffffff;transform:scaleX(0.9448);">API Gateway</span>
<span class="t" style="left:567.5px;top:99.02px;font-size:6.9px;line-height:7px;color:#ffffff;transform:scaleX(0.8584);">RDS</span>
<span class="t" style="left:602.5px;top:99.02px;font-size:6.9px;line-height:7px;color:#ffffff;transform:scaleX(0.7981);">EC2</span>
<span class="t" style="left:636.2px;top:99.02px;font-size:6.9px;line-height:7px;color:#ffffff;transform:scaleX(0.8326);">VPC</span>
<span class="t" style="left:670.5px;top:99.02px;font-size:6.9px;line-height:7px;color:#ffffff;transform:scaleX(0.9654);">Route 53</span>
<span class="t" style="left:720px;top:99.02px;font-size:6.9px;line-height:7px;color:#ffffff;transform:scaleX(1.0003);">AWS Private Certificate Authority</span>
<span class="t" style="left:843px;top:99.02px;font-size:6.9px;line-height:7px;color:#ffffff;transform:scaleX(0.9687);">Elastic Container Registry</span>
<span class="t" style="left:942.5px;top:99.02px;font-size:6.9px;line-height:7px;color:#ffffff;transform:scaleX(0.9279);">Secrets Manager</span>
<span class="t" style="left:47px;top:146.78px;font-size:10px;line-height:11px;color:#0f141a;font-weight:700;-webkit-text-stroke-width:0;transform:scaleX(0.9467);">VPC dashboard</span>
<span class="t" style="left:47px;top:170.19px;font-size:7.8px;line-height:9px;color:#353941;transform:scaleX(0.9660);">EC2 Global View</span>
<span class="t" style="left:54.6px;top:189.09px;font-size:7.8px;line-height:9px;color:#656871;font-style:italic;transform:scaleX(0.9544);">Filter by VPC:</span>
<span class="t" style="left:47px;top:211.69px;font-size:8.9px;line-height:10px;color:#0f141a;font-weight:700;-webkit-text-stroke-width:0;transform:scaleX(0.9956);">Virtual private cloud</span>
<span class="t" style="left:47px;top:228.69px;font-size:7.8px;line-height:9px;color:#006ce0;font-weight:700;-webkit-text-stroke-width:0;transform:scaleX(0.9190);">Your VPCs</span>
<span class="t" style="left:47px;top:244.39px;font-size:7.8px;line-height:9px;color:#353941;transform:scaleX(0.9782);">Subnets</span>
<span class="t" style="left:47px;top:259.99px;font-size:7.8px;line-height:9px;color:#353941;transform:scaleX(1.0004);">Route tables</span>
<span class="t" style="left:47px;top:275.49px;font-size:7.8px;line-height:9px;color:#353941;transform:scaleX(1.0236);">Internet gateways</span>
<span class="t" style="left:47px;top:291.19px;font-size:7.8px;line-height:9px;color:#353941;transform:scaleX(1.0103);">Egress-only Internet</span>
<span class="t" style="left:47px;top:302.09px;font-size:7.8px;line-height:9px;color:#353941;transform:scaleX(0.9954);">gateways</span>
<span class="t" style="left:47px;top:317.69px;font-size:7.8px;line-height:9px;color:#353941;transform:scaleX(0.9866);">DHCP option sets</span>
<span class="t" style="left:47px;top:333.29px;font-size:7.8px;line-height:9px;color:#353941;transform:scaleX(0.9394);">Elastic IPs</span>
<span class="t" style="left:47px;top:348.89px;font-size:7.8px;line-height:9px;color:#353941;transform:scaleX(1.0095);">Managed prefix lists</span>
<span class="t" style="left:47px;top:364.49px;font-size:7.8px;line-height:9px;color:#353941;transform:scaleX(1.0090);">Endpoints</span>
<span class="t" style="left:47px;top:380.09px;font-size:7.8px;line-height:9px;color:#353941;transform:scaleX(0.9911);">Endpoint services</span>
<span class="t" style="left:47px;top:395.69px;font-size:7.8px;line-height:9px;color:#353941;transform:scaleX(0.9803);">NAT gateways</span>
<span class="t" style="left:47px;top:411.29px;font-size:7.8px;line-height:9px;color:#353941;transform:scaleX(0.9978);">Peering connections</span>
<span class="t" style="left:47px;top:430.79px;font-size:8.9px;line-height:10px;color:#0f141a;font-weight:700;-webkit-text-stroke-width:0;transform:scaleX(0.9563);">Security</span>
<span class="t" style="left:47px;top:447.19px;font-size:7.8px;line-height:9px;color:#353941;transform:scaleX(0.9817);">Network ACLs</span>
<span class="t" style="left:47px;top:462.79px;font-size:7.8px;line-height:9px;color:#353941;transform:scaleX(1.0005);">Security groups</span>
<span class="t" style="left:47px;top:482.19px;font-size:8.9px;line-height:10px;color:#0f141a;font-weight:700;-webkit-text-stroke-width:0;transform:scaleX(0.9943);">DNS firewall</span>
<span class="t" style="left:47px;top:498.79px;font-size:7.8px;line-height:9px;color:#353941;transform:scaleX(0.9870);">Rule groups</span>
<span class="t" style="left:47px;top:514.49px;font-size:7.8px;line-height:9px;color:#353941;transform:scaleX(1.0078);">Domain lists</span>
<span class="t" style="left:47px;top:533.99px;font-size:8.9px;line-height:10px;color:#0f141a;font-weight:700;-webkit-text-stroke-width:0;transform:scaleX(0.9996);">Network Firewall</span>
<span class="t" style="left:47px;top:550.49px;font-size:7.8px;line-height:9px;color:#353941;transform:scaleX(0.9816);">Firewalls</span>
<span class="t" style="left:176.5px;top:141.47px;font-size:11.1px;line-height:12px;color:#0f141a;font-weight:700;-webkit-text-stroke-width:0;transform:scaleX(0.9024);">Your VPCs</span>
<span class="t" style="left:230.5px;top:141.47px;font-size:11.1px;line-height:12px;color:#656871;transform:scaleX(1.0521);">(1/1)</span>
<span class="t" style="left:259.3px;top:145.5px;font-size:6.7px;line-height:7px;color:#006ce0;font-weight:700;-webkit-text-stroke-width:0;transform:scaleX(1.0191);">Info</span>
<span class="t" style="left:792.8px;top:140.4px;font-size:6.7px;line-height:7px;color:#656871;transform:scaleX(1.0132);">Last updated</span>
<span class="t" style="left:763px;top:149.1px;font-size:6.7px;line-height:7px;color:#656871;transform:scaleX(1.0253);">less than a minute ago</span>
<span class="t" style="left:867px;top:142.09px;font-size:7.8px;line-height:9px;color:#006ce0;font-weight:700;-webkit-text-stroke-width:0;transform:scaleX(0.9373);">Actions</span>
<span class="t" style="left:930px;top:142.09px;font-size:7.8px;line-height:9px;color:#0f141a;font-weight:700;-webkit-text-stroke-width:0;transform:scaleX(0.9536);">Create VPC</span>
<span class="t" style="left:197.5px;top:162.09px;font-size:7.8px;line-height:9px;color:#656871;font-style:italic;transform:scaleX(0.9102);">Search</span>
<span class="t" style="left:932.4px;top:162.09px;font-size:7.8px;line-height:9px;color:#0f141a;font-weight:700;-webkit-text-stroke-width:0;transform:scaleX(0.8748);">1</span>
<span class="t" style="left:207.5px;top:182.89px;font-size:7.8px;line-height:9px;color:#0f141a;font-weight:700;-webkit-text-stroke-width:0;transform:scaleX(0.9647);">Name</span>
<span class="t" style="left:374.3px;top:182.89px;font-size:7.8px;line-height:9px;color:#0f141a;font-weight:700;-webkit-text-stroke-width:0;transform:scaleX(0.9231);">VPC ID</span>
<span class="t" style="left:496.5px;top:182.89px;font-size:7.8px;line-height:9px;color:#0f141a;font-weight:700;-webkit-text-stroke-width:0;transform:scaleX(0.9854);">State</span>
<span class="t" style="left:580px;top:182.89px;font-size:7.8px;line-height:9px;color:#0f141a;font-weight:700;-webkit-text-stroke-width:0;transform:scaleX(0.9757);">Block Public...</span>
<span class="t" style="left:663.3px;top:182.89px;font-size:7.8px;line-height:9px;color:#0f141a;font-weight:700;-webkit-text-stroke-width:0;transform:scaleX(0.9526);">IPv4 CIDR</span>
<span class="t" style="left:774.8px;top:182.89px;font-size:7.8px;line-height:9px;color:#0f141a;font-weight:700;-webkit-text-stroke-width:0;transform:scaleX(0.9446);">IPv6 CIDR</span>
<span class="t" style="left:913.5px;top:182.89px;font-size:7.8px;line-height:9px;color:#0f141a;font-weight:700;-webkit-text-stroke-width:0;transform:scaleX(0.9613);">DHCP option set</span>
<span class="t" style="left:207px;top:200.09px;font-size:7.8px;line-height:9px;color:#0f141a;font-weight:700;-webkit-text-stroke-width:0;transform:scaleX(0.9669);-webkit-text-stroke-width:0.15px;">–</span>
<span class="t" style="left:374.3px;top:199.69px;font-size:7.8px;line-height:9px;color:#006ce0;text-decoration:underline;transform:scaleX(1.0057);">vpc-0acc485e8c4c36b93</span>
<span class="t" style="left:507.8px;top:199.69px;font-size:7.8px;line-height:9px;color:#00802f;transform:scaleX(1.0063);">Available</span>
<span class="t" style="left:591.3px;top:199.69px;font-size:7.8px;line-height:9px;color:#656871;transform:scaleX(1.0423);">Off</span>
<span class="t" style="left:663.3px;top:199.69px;font-size:7.8px;line-height:9px;color:#0f141a;transform:scaleX(1.0419);">172.31.0.0/16</span>
<span class="t" style="left:774.5px;top:200.09px;font-size:7.8px;line-height:9px;color:#0f141a;font-weight:700;-webkit-text-stroke-width:0;transform:scaleX(0.9669);-webkit-text-stroke-width:0.15px;">–</span>
<span class="t" style="left:913.5px;top:199.69px;font-size:7.8px;line-height:9px;color:#006ce0;text-decoration:underline;transform:scaleX(1.0367);clip-path:inset(0 26.6% 0 0);">dopt-0ce833ac83264f974</span>
<span class="t" style="left:174.3px;top:329.57px;font-size:11.1px;line-height:12px;color:#0f141a;font-weight:700;-webkit-text-stroke-width:0;transform:scaleX(0.9602);">vpc-0acc485e8c4c36b93</span>
<span class="t" style="left:186px;top:353.89px;font-size:8.9px;line-height:10px;color:#006ce0;font-weight:700;-webkit-text-stroke-width:0;transform:scaleX(0.9791);">Details</span>
<span class="t" style="left:238px;top:353.89px;font-size:8.9px;line-height:10px;color:#353941;font-weight:700;-webkit-text-stroke-width:0;transform:scaleX(0.9449);">Resource map</span>
<span class="t" style="left:320px;top:353.89px;font-size:8.9px;line-height:10px;color:#353941;font-weight:700;-webkit-text-stroke-width:0;transform:scaleX(0.8934);">CIDRs</span>
<span class="t" style="left:367.5px;top:353.89px;font-size:8.9px;line-height:10px;color:#353941;font-weight:700;-webkit-text-stroke-width:0;transform:scaleX(0.9530);">Flow logs</span>
<span class="t" style="left:430px;top:353.89px;font-size:8.9px;line-height:10px;color:#353941;font-weight:700;-webkit-text-stroke-width:0;transform:scaleX(0.9470);">Tags</span>
<span class="t" style="left:185.8px;top:387.26px;font-size:10.5px;line-height:12px;color:#0f141a;font-weight:700;-webkit-text-stroke-width:0;transform:scaleX(1.0076);">Details</span>
<span class="t" style="left:185.8px;top:406.99px;font-size:7.8px;line-height:9px;color:#0f141a;font-weight:700;-webkit-text-stroke-width:0;transform:scaleX(0.9308);">VPC ID</span>
<span class="t" style="left:203.5px;top:418.09px;font-size:7.8px;line-height:9px;color:#0f141a;transform:scaleX(1.0127);">vpc-0acc485e8c4c36b93</span>
<span class="t" style="left:185.8px;top:438.04px;font-size:7.8px;line-height:9px;color:#0f141a;font-weight:700;-webkit-text-stroke-width:0;transform:scaleX(0.9711);">DNS resolution</span>
<span class="t" style="left:185.8px;top:449.14px;font-size:7.8px;line-height:9px;color:#0f141a;transform:scaleX(0.9782);">Enabled</span>
<span class="t" style="left:185.8px;top:469.09px;font-size:7.8px;line-height:9px;color:#0f141a;font-weight:700;-webkit-text-stroke-width:0;transform:scaleX(0.9744);">Main network ACL</span>
<span class="t" style="left:185.8px;top:480.19px;font-size:7.8px;line-height:9px;color:#006ce0;transform:scaleX(1.0360);">acl-07f5c1e30c4af605d</span>
<span class="t" style="left:185.8px;top:500.14px;font-size:7.8px;line-height:9px;color:#0f141a;font-weight:700;-webkit-text-stroke-width:0;transform:scaleX(0.9446);">IPv6 CIDR</span>
<span class="t" style="left:185.8px;top:510.94px;font-size:7.8px;line-height:9px;color:#0f141a;font-weight:700;-webkit-text-stroke-width:0;transform:scaleX(0.9669);-webkit-text-stroke-width:0.15px;">–</span>
<span class="t" style="left:387px;top:406.99px;font-size:7.8px;line-height:9px;color:#0f141a;font-weight:700;-webkit-text-stroke-width:0;transform:scaleX(0.9854);">State</span>
<span class="t" style="left:398.3px;top:418.09px;font-size:7.8px;line-height:9px;color:#00802f;transform:scaleX(1.0063);">Available</span>
<span class="t" style="left:387px;top:438.04px;font-size:7.8px;line-height:9px;color:#0f141a;font-weight:700;-webkit-text-stroke-width:0;transform:scaleX(0.9658);">Tenancy</span>
<span class="t" style="left:387px;top:449.14px;font-size:7.8px;line-height:9px;color:#0f141a;transform:scaleX(1.0674);">default</span>
<span class="t" style="left:387px;top:469.09px;font-size:7.8px;line-height:9px;color:#0f141a;font-weight:700;-webkit-text-stroke-width:0;transform:scaleX(0.9815);">Default VPC</span>
<span class="t" style="left:387px;top:480.19px;font-size:7.8px;line-height:9px;color:#0f141a;transform:scaleX(0.9266);">Yes</span>
<span class="t" style="left:387px;top:500.14px;font-size:7.8px;line-height:9px;color:#0f141a;font-weight:700;-webkit-text-stroke-width:0;transform:scaleX(0.9706);">Network Address Usage metrics</span>
<span class="t" style="left:387px;top:511.24px;font-size:7.8px;line-height:9px;color:#0f141a;transform:scaleX(0.9887);">Disabled</span>
<span class="t" style="left:588px;top:406.99px;font-size:7.8px;line-height:9px;color:#0f141a;font-weight:700;-webkit-text-stroke-width:0;transform:scaleX(0.9252);">Block Public Access</span>
<span class="t" style="left:599.3px;top:418.09px;font-size:7.8px;line-height:9px;color:#656871;transform:scaleX(1.0423);">Off</span>
<span class="t" style="left:588px;top:438.04px;font-size:7.8px;line-height:9px;color:#0f141a;font-weight:700;-webkit-text-stroke-width:0;transform:scaleX(0.9695);">DHCP option set</span>
<span class="t" style="left:588px;top:449.14px;font-size:7.8px;line-height:9px;color:#006ce0;transform:scaleX(1.0401);">dopt-0ce833ac83264f974</span>
<span class="t" style="left:588px;top:469.09px;font-size:7.8px;line-height:9px;color:#0f141a;font-weight:700;-webkit-text-stroke-width:0;transform:scaleX(0.9473);">IPv4 CIDR</span>
<span class="t" style="left:588px;top:480.19px;font-size:7.8px;line-height:9px;color:#0f141a;transform:scaleX(1.0440);">172.31.0.0/16</span>
<span class="t" style="left:588px;top:500.14px;font-size:7.8px;line-height:9px;color:#0f141a;font-weight:700;-webkit-text-stroke-width:0;transform:scaleX(0.9729);">Route 53 Resolver DNS Firewall rule groups</span>
<span class="t" style="left:588px;top:510.94px;font-size:7.8px;line-height:9px;color:#0f141a;font-weight:700;-webkit-text-stroke-width:0;transform:scaleX(0.9669);-webkit-text-stroke-width:0.15px;">–</span>
<span class="t" style="left:788.9px;top:406.99px;font-size:7.8px;line-height:9px;color:#0f141a;font-weight:700;-webkit-text-stroke-width:0;transform:scaleX(0.9549);">DNS hostnames</span>
<span class="t" style="left:788.9px;top:418.09px;font-size:7.8px;line-height:9px;color:#0f141a;transform:scaleX(0.9817);">Enabled</span>
<span class="t" style="left:788.9px;top:438.04px;font-size:7.8px;line-height:9px;color:#0f141a;font-weight:700;-webkit-text-stroke-width:0;transform:scaleX(1.0051);">Main route table</span>
<span class="t" style="left:788.9px;top:449.14px;font-size:7.8px;line-height:9px;color:#006ce0;transform:scaleX(1.0290);">rtb-0e464aa49e0aeb72e</span>
<span class="t" style="left:788.9px;top:469.09px;font-size:7.8px;line-height:9px;color:#0f141a;font-weight:700;-webkit-text-stroke-width:0;transform:scaleX(0.9893);">IPv6 pool</span>
<span class="t" style="left:788.9px;top:479.89px;font-size:7.8px;line-height:9px;color:#0f141a;font-weight:700;-webkit-text-stroke-width:0;transform:scaleX(0.9669);-webkit-text-stroke-width:0.15px;">–</span>
<span class="t" style="left:40px;top:569.5px;font-size:6.7px;line-height:7px;color:#f0f1f3;transform:scaleX(0.9532);">Feedback</span>
<span class="t" style="left:688.4px;top:569.5px;font-size:6.7px;line-height:7px;color:#dedee3;transform:scaleX(1.0072);">© 2025, Amazon Web Services, Inc. or its affiliates.</span>
<span class="t" style="left:857.7px;top:569.5px;font-size:6.7px;line-height:7px;color:#f0f1f3;transform:scaleX(0.9709);">Privacy</span>
<span class="t" style="left:893.2px;top:569.5px;font-size:6.7px;line-height:7px;color:#f0f1f3;transform:scaleX(0.9943);">Terms</span>
<span class="t" style="left:925.5px;top:569.5px;font-size:6.7px;line-height:7px;color:#f0f1f3;transform:scaleX(0.9897);">Cookie preferences</span>
<div class="a" style="left:968px;top:93px;width:9px;height:17px;background:linear-gradient(90deg,rgba(22,29,39,0),#161d27 90%);"></div>
<div class="a" style="left:976.5px;top:93px;width:15.5px;height:17px;background:#161d27;"></div>
<svg class="a" style="left:980.4px;top:97px;" width="5.2" height="8.6" viewBox="0 0 5.2 8.6"><path d="M1 .8 L4.4 4.3 L1 7.8" stroke="#fff" stroke-width="1.1" fill="none"/></svg>
</div></div>
</body></html>
